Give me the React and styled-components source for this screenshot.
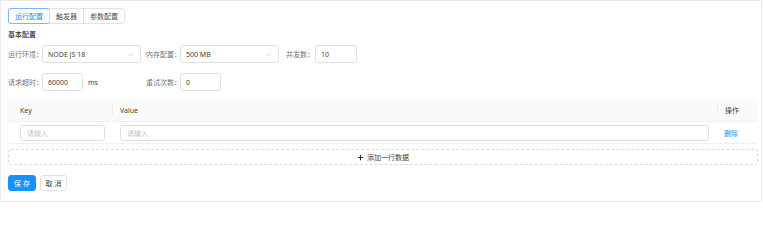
import React from 'react'
import styled, { createGlobalStyle } from 'styled-components'

const GlobalStyle = createGlobalStyle`
  body {
    margin: 0;
    background: #fff;
    font-family: "Noto Sans", "Noto Sans CJK SC", sans-serif;
    font-size: 7px;
    color: rgba(0, 0, 0, 0.85);
  }
  * { box-sizing: border-box; }
`

const Card = styled.div`
  width: 762px;
  height: 202px;
  border: 1px solid #ebebeb;
  padding: 7px 3px 0 7px;
`

const Tabs = styled.div`
  display: inline-flex;
  height: 16px;
  border: 1px solid #e3e3e3;
  border-radius: 3px;
`

const Tab = styled.div`
  display: flex;
  align-items: center;
  justify-content: center;
  width: ${p => p.$w}px;
  margin: -1px 0 -1px -1px;
  border: 1px solid ${p => (p.$active ? '#7ab8f5' : 'transparent')};
  border-left-color: ${p => (p.$active ? '#7ab8f5' : '#e3e3e3')};
  border-radius: ${p => (p.$active ? '3px' : '0')};
  color: ${p => (p.$active ? '#1890ff' : 'rgba(0,0,0,0.75)')};
  &:first-child { margin-left: -1px; border-left-color: #7ab8f5; }
  &:last-child { margin-right: -1px; }
`

const SectionTitle = styled.div`
  margin-top: 6px;
  height: 10px;
  line-height: 10px;
  font-weight: 500;
  color: rgba(0, 0, 0, 0.85);
`

const FormRow = styled.div`
  display: grid;
  grid-template-columns: 138px 137px auto;
  align-items: center;
  margin-top: ${p => p.$top}px;
`

const FormItem = styled.div`
  display: flex;
  align-items: center;
`

const Label = styled.label`
  width: ${p => p.$w || 34}px;
  flex: none;
  text-align: right;
  padding-right: 1px;
  color: rgba(0, 0, 0, 0.6);
  white-space: nowrap;
`

const Field = styled.div`
  position: relative;
  display: flex;
  align-items: center;
  flex: none;
  width: ${p => p.$w}px;
  height: 18px;
  padding: 0 5px;
  border: 1px solid #e0e0e0;
  border-radius: 3px;
  color: rgba(0, 0, 0, 0.8);
  background: #fff;
`

const Chevron = styled.svg`
  position: absolute;
  right: 6px;
  top: 5px;
  width: 7px;
  height: 7px;
`

const Suffix = styled.span`
  margin-left: 5px;
  color: rgba(0, 0, 0, 0.8);
`

const Table = styled.div`
  margin-top: 8px;
  width: 750px;
`

const Row = styled.div`
  display: grid;
  grid-template-columns: 104px 605px 41px;
  height: ${p => p.$h}px;
  background: ${p => (p.$head ? '#fafafa' : '#fff')};
  border-bottom: 1px solid #f0f0f0;
`

const Cell = styled.div`
  position: relative;
  display: flex;
  align-items: center;
  padding: 0 ${p => p.$pr ?? 8}px 0 ${p => p.$pl ?? 8}px;
  color: ${p => (p.$head ? 'rgba(0,0,0,0.8)' : 'inherit')};
  ${p =>
    p.$divider &&
    `&::before {
      content: '';
      position: absolute;
      left: 0;
      top: 6px;
      height: 10px;
      width: 1px;
      background: #ececec;
    }`}
`

const TableInput = styled.div`
  display: flex;
  align-items: center;
  width: 100%;
  height: 16px;
  padding: 0 6px;
  border: 1px solid #e0e0e0;
  border-radius: 3px;
  color: #c4c4c4;
`

const LinkText = styled.span`
  color: #1890ff;
`

const AddButton = styled.div`
  display: flex;
  align-items: center;
  justify-content: center;
  gap: 3px;
  margin-top: 5px;
  width: 750px;
  height: 16px;
  border: 1px dashed #dcdcdc;
  border-radius: 3px;
  color: rgba(0, 0, 0, 0.8);
`

const Actions = styled.div`
  display: flex;
  gap: 4px;
  margin-top: 10px;
`

const Button = styled.div`
  display: flex;
  align-items: center;
  justify-content: center;
  width: ${p => p.$w}px;
  height: 16px;
  border-radius: 3px;
  border: 1px solid ${p => (p.$primary ? '#1890ff' : '#e0e0e0')};
  background: ${p => (p.$primary ? '#1890ff' : '#fff')};
  color: ${p => (p.$primary ? '#fff' : 'rgba(0,0,0,0.8)')};
  letter-spacing: 2px;
  text-indent: 2px;
`

const ChevronIcon = () => (
  <Chevron viewBox="0 0 10 10">
    <path d="M1.5 3.5 L5 7 L8.5 3.5" fill="none" stroke="#c8c8c8" strokeWidth="1" />
  </Chevron>
)

const PlusIcon = () => (
  <svg width="7" height="7" viewBox="0 0 10 10">
    <path d="M5 1 V9 M1 5 H9" stroke="rgba(0,0,0,0.8)" strokeWidth="1.6" />
  </svg>
)

const App = () => {
  return (
    <>
      <GlobalStyle />
      <Card>
        <Tabs>
          <Tab $active $w={42}>运行配置</Tab>
          <Tab $w={35}>触发器</Tab>
          <Tab $w={42}>参数配置</Tab>
        </Tabs>

        <SectionTitle>基本配置</SectionTitle>

        <FormRow $top={5}>
          <FormItem>
            <Label>运行环境：</Label>
            <Field $w={99}>NODE JS 18<ChevronIcon /></Field>
          </FormItem>
          <FormItem>
            <Label>内存配置：</Label>
            <Field $w={99}>500 MB<ChevronIcon /></Field>
          </FormItem>
          <FormItem>
            <Label $w={32}>并发数：</Label>
            <Field $w={42}>10</Field>
          </FormItem>
        </FormRow>

        <FormRow $top={10}>
          <FormItem>
            <Label>请求超时：</Label>
            <Field $w={41}>60000</Field>
            <Suffix>ms</Suffix>
          </FormItem>
          <FormItem>
            <Label>重试次数：</Label>
            <Field $w={41}>0</Field>
          </FormItem>
        </FormRow>

        <Table>
          <Row $head $h={23}>
            <Cell $head $pl={12}>Key</Cell>
            <Cell $head $divider>Value</Cell>
            <Cell $head $divider>操作</Cell>
          </Row>
          <Row $h={22}>
            <Cell $pl={12} $pr={7}><TableInput>请输入</TableInput></Cell>
            <Cell><TableInput>请输入</TableInput></Cell>
            <Cell $pl={7}><LinkText>删除</LinkText></Cell>
          </Row>
        </Table>

        <AddButton><PlusIcon />添加一行数据</AddButton>

        <Actions>
          <Button $primary $w={28}>保存</Button>
          <Button $w={27}>取消</Button>
        </Actions>
      </Card>
    </>
  )
}

export default App
